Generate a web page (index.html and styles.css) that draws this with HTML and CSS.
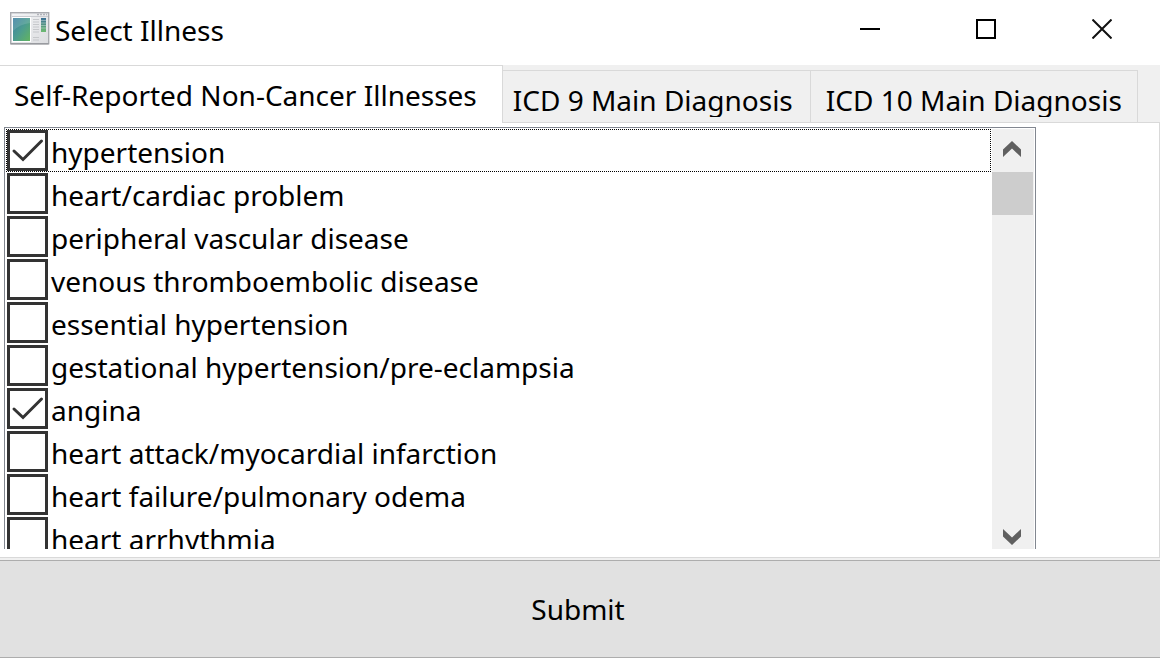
FILE: index.html
```html
<!DOCTYPE html>
<html lang="en">
<head>
<meta charset="utf-8">
<title>Select Illness</title>
<link rel="stylesheet" href="styles.css">
</head>
<body>
<header class="titlebar">
  <svg class="app-icon" width="40" height="34" viewBox="0 0 40 34" aria-hidden="true">
    <defs>
      <linearGradient id="frame" x1="0" y1="0" x2="1" y2="1"><stop offset="0" stop-color="#f4f5f7"/><stop offset="1" stop-color="#dcdde0"/></linearGradient>
      <linearGradient id="pane" x1="0" y1="0" x2="1" y2="1"><stop offset="0" stop-color="#3d7fa3"/><stop offset=".5" stop-color="#4c9c90"/><stop offset="1" stop-color="#62b45f"/></linearGradient>
      <linearGradient id="bar" x1="0" y1="0" x2="0" y2="1"><stop offset="0" stop-color="#3b7095"/><stop offset="1" stop-color="#6ebb72"/></linearGradient>
    </defs>
    <rect x=".7" y=".7" width="38" height="31" fill="url(#frame)" stroke="#a9abb0" stroke-width="1.4"/>
    <path d="M.7 31.700h38" stroke="#999ba0" stroke-width="1.4"/>
    <path d="M27 2.500h10" stroke="#b2b4ba" stroke-width="1.4" stroke-dasharray="2 1"/>
    <path d="M2 4.500h36" stroke="#c9cbd0"/>
    <rect x="2" y="5" width="19" height="25" fill="#fff"/>
    <rect x="3" y="6" width="17" height="23" fill="url(#pane)"/>
    <path d="M3 6h17v5Q10 12 3 19z" fill="#fff" opacity=".13"/>
    <path d="M23 7.500h6M23 10h6M23 12.500h6M23 15h6M23 17.500h6M23 20h6M23 25.500h6M23 28h6" stroke="#c6c8cb" stroke-width="1.2"/>
    <rect x="31" y="6" width="5" height="14" fill="url(#bar)"/>
    <path d="M31 8.500h5M31 11h5M31 13.500h5M31 16h5" stroke="#fff" stroke-width=".6" opacity=".6"/>
  </svg>
  <h1 class="title">Select Illness</h1>
  <div class="window-buttons">
    <button class="window-button" type="button" aria-label="Minimize"><svg width="20" height="20" viewBox="0 0 20 20"><path d="M0 10h20" stroke="#000" stroke-width="2"/></svg></button>
    <button class="window-button" type="button" aria-label="Maximize"><svg width="20" height="20" viewBox="0 0 20 20"><path d="M1 1h18v18H1z" fill="none" stroke="#000" stroke-width="2"/></svg></button>
    <button class="window-button" type="button" aria-label="Close"><svg width="20" height="20" viewBox="0 0 20 20"><path d="M.5 .5l19 19M19.500 .5l-19 19" stroke="#111" stroke-width="2"/></svg></button>
  </div>
</header>
<nav class="tabs" role="tablist">
  <button class="tab tab-active" type="button" role="tab" aria-selected="true">Self-Reported Non-Cancer Illnesses</button>
  <button class="tab" type="button" role="tab" aria-selected="false"><span class="tab-text">ICD 9 Main Diagnosis</span></button>
  <button class="tab tab-last" type="button" role="tab" aria-selected="false"><span class="tab-text">ICD 10 Main Diagnosis</span></button>
  <span class="tabs-rest"></span>
</nav>
<main class="panel">
  <div class="listbox">
    <ul class="items">
      <li><label class="item item-focused"><span class="box"><input class="check" type="checkbox" checked><svg class="tick" width="41" height="41" viewBox="0 0 41 41"><path d="M7 21l9 8.500L34.500 11" /></svg></span><span class="item-text">hypertension</span></label></li>
      <li><label class="item"><span class="box"><input class="check" type="checkbox"></span><span class="item-text">heart/cardiac problem</span></label></li>
      <li><label class="item"><span class="box"><input class="check" type="checkbox"></span><span class="item-text">peripheral vascular disease</span></label></li>
      <li><label class="item"><span class="box"><input class="check" type="checkbox"></span><span class="item-text">venous thromboembolic disease</span></label></li>
      <li><label class="item"><span class="box"><input class="check" type="checkbox"></span><span class="item-text">essential hypertension</span></label></li>
      <li><label class="item"><span class="box"><input class="check" type="checkbox"></span><span class="item-text">gestational hypertension/pre-eclampsia</span></label></li>
      <li><label class="item"><span class="box"><input class="check" type="checkbox" checked><svg class="tick" width="41" height="41" viewBox="0 0 41 41"><path d="M7 21l9 8.500L34.500 11" /></svg></span><span class="item-text">angina</span></label></li>
      <li><label class="item"><span class="box"><input class="check" type="checkbox"></span><span class="item-text">heart attack/myocardial infarction</span></label></li>
      <li><label class="item"><span class="box"><input class="check" type="checkbox"></span><span class="item-text">heart failure/pulmonary odema</span></label></li>
      <li><label class="item"><span class="box"><input class="check" type="checkbox"></span><span class="item-text">heart arrhythmia</span></label></li>
    </ul>
    <div class="scrollbar">
      <button class="scroll-button" type="button" aria-label="Scroll up"><svg width="18" height="16" viewBox="0 0 18 16"><path d="M9 0l9 8.500V16L9 7.500 0 16V8.500z" fill="#606060"/></svg></button>
      <div class="scroll-track"><div class="scroll-thumb"></div></div>
      <button class="scroll-button scroll-down" type="button" aria-label="Scroll down"><svg width="18" height="16" viewBox="0 0 18 16"><path d="M9 16l9-8.500V0L9 8.500 0 0v7.500z" fill="#606060"/></svg></button>
    </div>
  </div>
</main>
<button class="submit" type="button">Submit</button>
</body>
</html>
```
FILE: styles.css
```css
* { box-sizing: border-box; }

body {
  margin: 0;
  height: 100vh;
  display: flex;
  flex-direction: column;
  background: #f0f0f0;
  color: #000;
  font: 28px/42px "Noto Sans", "Open Sans", sans-serif;
}

button { font: inherit; color: inherit; border: 0; padding: 0; background: none; }

.titlebar {
  flex: none;
  display: flex;
  align-items: center;
  height: 65px;
  padding: 0 0 7px 10px;
  background: #fff;
}
.app-icon { flex: none; margin-right: 5px; }
.title { margin: 0; padding-top: 2px; font-size: inherit; font-weight: 400; }
.window-buttons { display: flex; margin-left: auto; }
.window-button { width: 116px; height: 58px; display: grid; place-items: center; }

.tabs { flex: none; display: flex; align-items: stretch; height: 58px; }
.tab {
  display: flex;
  align-items: flex-start;
  margin-top: 5px;
  padding: 8px 17px 0 10px;
  border: 1px solid #d9d9d9;
  border-left: 0;
  white-space: nowrap;
}
.tab-active {
  margin-top: 0;
  padding: 8px 25px 0 14px;
  background: #fff;
  border-bottom: 0;
}
.tab-last { padding: 8px 15px 0 15px; }
.tab-text { height: 38px; overflow: hidden; }
.tabs-rest { flex: 1; border-bottom: 1px solid #d9d9d9; }

.panel {
  flex: 1;
  min-height: 0;
  display: flex;
  padding: 4px 123px 8px 4px;
  background: #fff;
  border: 1px solid #d9d9d9;
  border-width: 0 1px 1px 0;
}
.listbox {
  flex: 1;
  display: flex;
  min-width: 0;
  padding: 1px 1px 0;
  border: 1px solid #828790;
  border-bottom: 0;
}
.items { flex: 1; margin: 0; padding: 0; list-style: none; overflow: hidden; }
.item {
  display: flex;
  align-items: center;
  gap: 3px;
  height: 43px;
  padding-left: 1px;
  white-space: nowrap;
}
.item-text { padding-top: 2px; }
.item-focused { outline: 1px dotted #000; outline-offset: -1px; }
.box { display: grid; }
.check, .tick { grid-area: 1 / 1; }
.check {
  appearance: none;
  width: 41px;
  height: 41px;
  margin: 0;
  border: 3px solid #333;
  background: #fff;
}
.tick { pointer-events: none; }
.tick path { fill: none; stroke: #333; stroke-width: 3; stroke-linecap: round; }

.scrollbar {
  display: flex;
  flex-direction: column;
  width: 42px;
  margin-left: 1px;
  background: #f0f0f0;
}
.scroll-button { flex: none; height: 43px; display: grid; place-items: center; padding: 0 2px 3px 0; }
.scroll-down { height: 24px; padding-bottom: 0; }
.scroll-track { flex: 1; }
.scroll-thumb { height: 43px; margin-right: 1px; background: #cdcdcd; }

.submit {
  flex: none;
  height: 98px;
  margin-top: 2px;
  padding: 0 4px 0 0;
  background: #e1e1e1;
  border: 1px solid #adadad;
  border-width: 1px 0;
}
```
